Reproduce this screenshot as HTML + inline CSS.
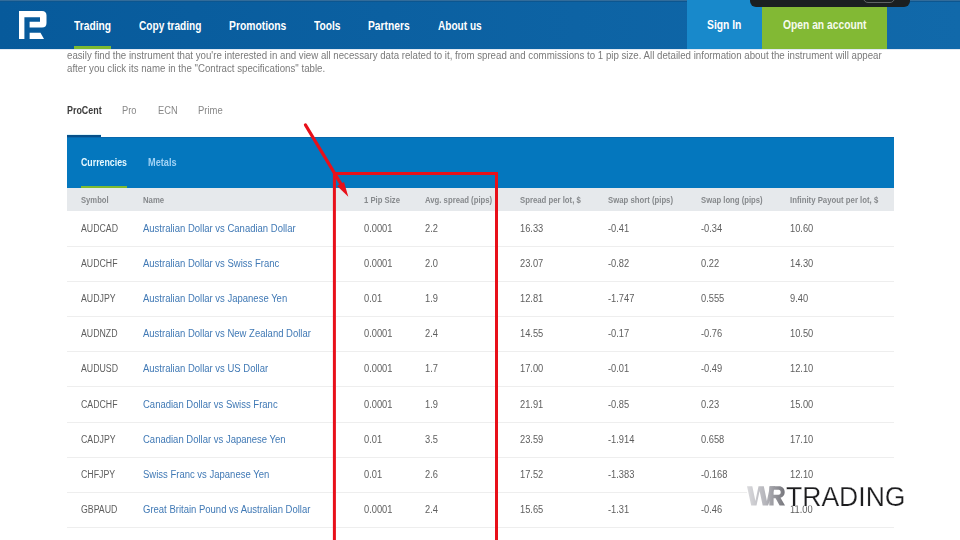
<!DOCTYPE html>
<html><head><meta charset="utf-8"><style>
*{margin:0;padding:0;box-sizing:border-box}
html,body{width:960px;height:540px;overflow:hidden;background:#fff;font-family:"Liberation Sans",sans-serif;position:relative}
.t{position:absolute;white-space:nowrap;line-height:1;transform-origin:0 0}
.b{position:absolute}
#wrap{position:absolute;left:0;top:0;width:960px;height:540px;overflow:hidden;filter:blur(0.3px)}
</style></head><body><div id="wrap">
<div class="b" style="left:0px;top:0px;width:960px;height:49px;background:linear-gradient(90deg,#075a9b,#1169aa);"></div>
<div class="b" style="left:0px;top:0px;width:960px;height:1px;background:#336c9a;"></div>
<div class="b" style="left:0px;top:1px;width:960px;height:1px;background:#0c5690;"></div>
<div class="b" style="left:687px;top:0px;width:75px;height:49px;background:#1889cb;"></div>
<div class="b" style="left:762px;top:0px;width:125px;height:49px;background:#82b934;"></div>
<div class="b" style="left:74px;top:46px;width:37px;height:3px;background:#7dba31;"></div>
<div class="b" style="left:0px;top:49px;width:960px;height:1px;background:#e2eaf3;"></div>
<div class="b" style="left:750px;top:-10px;width:159.5px;height:17px;background:#1b1f21;border-radius:6px"></div>
<div class="b" style="left:863px;top:-10px;width:32px;height:12.5px;background:transparent;border:1px solid #5f6365;border-radius:5px"></div>
<div class="b" style="left:67px;top:137px;width:827px;height:51px;background:#0477be;"></div>
<div class="b" style="left:67px;top:137px;width:827px;height:1px;background:#0868ad;"></div>
<div class="b" style="left:67px;top:135px;width:34px;height:2px;background:#07508a;"></div>
<div class="b" style="left:67px;top:134px;width:34px;height:1px;background:#dff5fb;"></div>
<div class="b" style="left:81px;top:185.5px;width:46px;height:2.5px;background:#7dba31;"></div>
<div class="b" style="left:67px;top:188px;width:827px;height:23px;background:#e6e9ec;"></div>
<div class="b" style="left:67px;top:246px;width:827px;height:1px;background:#eeeeee;"></div>
<div class="b" style="left:67px;top:281px;width:827px;height:1px;background:#eeeeee;"></div>
<div class="b" style="left:67px;top:316px;width:827px;height:1px;background:#eeeeee;"></div>
<div class="b" style="left:67px;top:351px;width:827px;height:1px;background:#eeeeee;"></div>
<div class="b" style="left:67px;top:386px;width:827px;height:1px;background:#eeeeee;"></div>
<div class="b" style="left:67px;top:422px;width:827px;height:1px;background:#eeeeee;"></div>
<div class="b" style="left:67px;top:457px;width:827px;height:1px;background:#eeeeee;"></div>
<div class="b" style="left:67px;top:492px;width:827px;height:1px;background:#eeeeee;"></div>
<div class="b" style="left:67px;top:527px;width:827px;height:1px;background:#eeeeee;"></div>
<svg class="b" style="left:0;top:0" width="60" height="49" viewBox="0 0 60 49">
<path fill="#fff" d="M19 11 H42 Q46.5 11 46.5 15.5 V23 Q46.5 27.6 42 27.6 H29.6 V21.7 H40 V17.2 H24.4 V39 H19 Z"/>
<path fill="#fff" d="M29.6 32.8 H40.5 L44 39 H29.6 Z"/>
</svg>
<div class="t" style="left:74.25px;top:20.00px;font-size:12.5px;font-weight:bold;color:#ffffff;transform:scaleX(0.82)">Trading</div>
<div class="t" style="left:138.75px;top:20.00px;font-size:12.5px;font-weight:bold;color:#ffffff;transform:scaleX(0.81)">Copy trading</div>
<div class="t" style="left:228.75px;top:20.00px;font-size:12.5px;font-weight:bold;color:#ffffff;transform:scaleX(0.826)">Promotions</div>
<div class="t" style="left:314.25px;top:20.00px;font-size:12.5px;font-weight:bold;color:#ffffff;transform:scaleX(0.82)">Tools</div>
<div class="t" style="left:368.25px;top:20.00px;font-size:12.5px;font-weight:bold;color:#ffffff;transform:scaleX(0.82)">Partners</div>
<div class="t" style="left:438.25px;top:20.00px;font-size:12.5px;font-weight:bold;color:#ffffff;transform:scaleX(0.807)">About us</div>
<div class="t" style="left:706.80px;top:19.00px;font-size:12.5px;font-weight:bold;color:#fff;transform:scaleX(0.826)">Sign In</div>
<div class="t" style="left:782.80px;top:19.00px;font-size:12.5px;font-weight:bold;color:#f6fbee;transform:scaleX(0.823)">Open an account</div>
<div class="t" style="left:67.00px;top:50.00px;font-size:11px;font-weight:normal;color:#7a7a7a;transform:scaleX(0.881)">easily find the instrument that you're interested in and view all necessary data related to it, from spread and commissions to 1 pip size. All detailed information about the instrument will appear</div>
<div class="t" style="left:67.00px;top:63.00px;font-size:11px;font-weight:normal;color:#7a7a7a;transform:scaleX(0.88)">after you click its name in the "Contract specifications" table.</div>
<div class="t" style="left:67.00px;top:106.00px;font-size:10px;font-weight:bold;color:#3c3c3c;transform:scaleX(0.892)">ProCent</div>
<div class="t" style="left:122.40px;top:106.00px;font-size:10px;font-weight:normal;color:#888;transform:scaleX(0.93)">Pro</div>
<div class="t" style="left:157.90px;top:106.00px;font-size:10px;font-weight:normal;color:#888;transform:scaleX(0.93)">ECN</div>
<div class="t" style="left:197.50px;top:106.00px;font-size:10px;font-weight:normal;color:#888;transform:scaleX(0.945)">Prime</div>
<div class="t" style="left:81.00px;top:158.00px;font-size:10px;font-weight:bold;color:#e6f8ff;transform:scaleX(0.88)">Currencies</div>
<div class="t" style="left:148.00px;top:158.00px;font-size:10px;font-weight:bold;color:#a2d3f5;transform:scaleX(0.919)">Metals</div>
<div class="t" style="left:80.70px;top:196.00px;font-size:9px;font-weight:bold;color:#86898c;transform:scaleX(0.85)">Symbol</div>
<div class="t" style="left:142.70px;top:196.00px;font-size:9px;font-weight:bold;color:#86898c;transform:scaleX(0.86)">Name</div>
<div class="t" style="left:364.40px;top:196.00px;font-size:9px;font-weight:bold;color:#86898c;transform:scaleX(0.857)">1 Pip Size</div>
<div class="t" style="left:424.80px;top:196.00px;font-size:9px;font-weight:bold;color:#86898c;transform:scaleX(0.859)">Avg. spread (pips)</div>
<div class="t" style="left:520.00px;top:196.00px;font-size:9px;font-weight:bold;color:#86898c;transform:scaleX(0.862)">Spread per lot, $</div>
<div class="t" style="left:607.90px;top:196.00px;font-size:9px;font-weight:bold;color:#86898c;transform:scaleX(0.861)">Swap short (pips)</div>
<div class="t" style="left:700.80px;top:196.00px;font-size:9px;font-weight:bold;color:#86898c;transform:scaleX(0.856)">Swap long (pips)</div>
<div class="t" style="left:789.70px;top:196.00px;font-size:9px;font-weight:bold;color:#86898c;transform:scaleX(0.865)">Infinity Payout per lot, $</div>
<div class="t" style="left:80.80px;top:224.00px;font-size:10px;font-weight:normal;color:#5e5e5e;transform:scaleX(0.876)">AUDCAD</div>
<div class="t" style="left:142.70px;top:224.00px;font-size:10px;font-weight:normal;color:#4079b5;transform:scaleX(0.95)">Australian Dollar vs Canadian Dollar</div>
<div class="t" style="left:364.00px;top:224.00px;font-size:10px;font-weight:normal;color:#5e5e5e;transform:scaleX(0.93)">0.0001</div>
<div class="t" style="left:424.80px;top:224.00px;font-size:10px;font-weight:normal;color:#5e5e5e;transform:scaleX(0.93)">2.2</div>
<div class="t" style="left:520.00px;top:224.00px;font-size:10px;font-weight:normal;color:#5e5e5e;transform:scaleX(0.93)">16.33</div>
<div class="t" style="left:607.90px;top:224.00px;font-size:10px;font-weight:normal;color:#5e5e5e;transform:scaleX(0.93)">-0.41</div>
<div class="t" style="left:700.80px;top:224.00px;font-size:10px;font-weight:normal;color:#5e5e5e;transform:scaleX(0.93)">-0.34</div>
<div class="t" style="left:789.70px;top:224.00px;font-size:10px;font-weight:normal;color:#5e5e5e;transform:scaleX(0.93)">10.60</div>
<div class="t" style="left:80.80px;top:259.00px;font-size:10px;font-weight:normal;color:#5e5e5e;transform:scaleX(0.876)">AUDCHF</div>
<div class="t" style="left:142.70px;top:259.00px;font-size:10px;font-weight:normal;color:#4079b5;transform:scaleX(0.95)">Australian Dollar vs Swiss Franc</div>
<div class="t" style="left:364.00px;top:259.00px;font-size:10px;font-weight:normal;color:#5e5e5e;transform:scaleX(0.93)">0.0001</div>
<div class="t" style="left:424.80px;top:259.00px;font-size:10px;font-weight:normal;color:#5e5e5e;transform:scaleX(0.93)">2.0</div>
<div class="t" style="left:520.00px;top:259.00px;font-size:10px;font-weight:normal;color:#5e5e5e;transform:scaleX(0.93)">23.07</div>
<div class="t" style="left:607.90px;top:259.00px;font-size:10px;font-weight:normal;color:#5e5e5e;transform:scaleX(0.93)">-0.82</div>
<div class="t" style="left:700.80px;top:259.00px;font-size:10px;font-weight:normal;color:#5e5e5e;transform:scaleX(0.93)">0.22</div>
<div class="t" style="left:789.70px;top:259.00px;font-size:10px;font-weight:normal;color:#5e5e5e;transform:scaleX(0.93)">14.30</div>
<div class="t" style="left:80.80px;top:294.00px;font-size:10px;font-weight:normal;color:#5e5e5e;transform:scaleX(0.876)">AUDJPY</div>
<div class="t" style="left:142.70px;top:294.00px;font-size:10px;font-weight:normal;color:#4079b5;transform:scaleX(0.95)">Australian Dollar vs Japanese Yen</div>
<div class="t" style="left:364.00px;top:294.00px;font-size:10px;font-weight:normal;color:#5e5e5e;transform:scaleX(0.93)">0.01</div>
<div class="t" style="left:424.80px;top:294.00px;font-size:10px;font-weight:normal;color:#5e5e5e;transform:scaleX(0.93)">1.9</div>
<div class="t" style="left:520.00px;top:294.00px;font-size:10px;font-weight:normal;color:#5e5e5e;transform:scaleX(0.93)">12.81</div>
<div class="t" style="left:607.90px;top:294.00px;font-size:10px;font-weight:normal;color:#5e5e5e;transform:scaleX(0.93)">-1.747</div>
<div class="t" style="left:700.80px;top:294.00px;font-size:10px;font-weight:normal;color:#5e5e5e;transform:scaleX(0.93)">0.555</div>
<div class="t" style="left:789.70px;top:294.00px;font-size:10px;font-weight:normal;color:#5e5e5e;transform:scaleX(0.93)">9.40</div>
<div class="t" style="left:80.80px;top:329.00px;font-size:10px;font-weight:normal;color:#5e5e5e;transform:scaleX(0.876)">AUDNZD</div>
<div class="t" style="left:142.70px;top:329.00px;font-size:10px;font-weight:normal;color:#4079b5;transform:scaleX(0.95)">Australian Dollar vs New Zealand Dollar</div>
<div class="t" style="left:364.00px;top:329.00px;font-size:10px;font-weight:normal;color:#5e5e5e;transform:scaleX(0.93)">0.0001</div>
<div class="t" style="left:424.80px;top:329.00px;font-size:10px;font-weight:normal;color:#5e5e5e;transform:scaleX(0.93)">2.4</div>
<div class="t" style="left:520.00px;top:329.00px;font-size:10px;font-weight:normal;color:#5e5e5e;transform:scaleX(0.93)">14.55</div>
<div class="t" style="left:607.90px;top:329.00px;font-size:10px;font-weight:normal;color:#5e5e5e;transform:scaleX(0.93)">-0.17</div>
<div class="t" style="left:700.80px;top:329.00px;font-size:10px;font-weight:normal;color:#5e5e5e;transform:scaleX(0.93)">-0.76</div>
<div class="t" style="left:789.70px;top:329.00px;font-size:10px;font-weight:normal;color:#5e5e5e;transform:scaleX(0.93)">10.50</div>
<div class="t" style="left:80.80px;top:364.00px;font-size:10px;font-weight:normal;color:#5e5e5e;transform:scaleX(0.876)">AUDUSD</div>
<div class="t" style="left:142.70px;top:364.00px;font-size:10px;font-weight:normal;color:#4079b5;transform:scaleX(0.95)">Australian Dollar vs US Dollar</div>
<div class="t" style="left:364.00px;top:364.00px;font-size:10px;font-weight:normal;color:#5e5e5e;transform:scaleX(0.93)">0.0001</div>
<div class="t" style="left:424.80px;top:364.00px;font-size:10px;font-weight:normal;color:#5e5e5e;transform:scaleX(0.93)">1.7</div>
<div class="t" style="left:520.00px;top:364.00px;font-size:10px;font-weight:normal;color:#5e5e5e;transform:scaleX(0.93)">17.00</div>
<div class="t" style="left:607.90px;top:364.00px;font-size:10px;font-weight:normal;color:#5e5e5e;transform:scaleX(0.93)">-0.01</div>
<div class="t" style="left:700.80px;top:364.00px;font-size:10px;font-weight:normal;color:#5e5e5e;transform:scaleX(0.93)">-0.49</div>
<div class="t" style="left:789.70px;top:364.00px;font-size:10px;font-weight:normal;color:#5e5e5e;transform:scaleX(0.93)">12.10</div>
<div class="t" style="left:80.80px;top:400.00px;font-size:10px;font-weight:normal;color:#5e5e5e;transform:scaleX(0.876)">CADCHF</div>
<div class="t" style="left:142.70px;top:400.00px;font-size:10px;font-weight:normal;color:#4079b5;transform:scaleX(0.95)">Canadian Dollar vs Swiss Franc</div>
<div class="t" style="left:364.00px;top:400.00px;font-size:10px;font-weight:normal;color:#5e5e5e;transform:scaleX(0.93)">0.0001</div>
<div class="t" style="left:424.80px;top:400.00px;font-size:10px;font-weight:normal;color:#5e5e5e;transform:scaleX(0.93)">1.9</div>
<div class="t" style="left:520.00px;top:400.00px;font-size:10px;font-weight:normal;color:#5e5e5e;transform:scaleX(0.93)">21.91</div>
<div class="t" style="left:607.90px;top:400.00px;font-size:10px;font-weight:normal;color:#5e5e5e;transform:scaleX(0.93)">-0.85</div>
<div class="t" style="left:700.80px;top:400.00px;font-size:10px;font-weight:normal;color:#5e5e5e;transform:scaleX(0.93)">0.23</div>
<div class="t" style="left:789.70px;top:400.00px;font-size:10px;font-weight:normal;color:#5e5e5e;transform:scaleX(0.93)">15.00</div>
<div class="t" style="left:80.80px;top:435.00px;font-size:10px;font-weight:normal;color:#5e5e5e;transform:scaleX(0.876)">CADJPY</div>
<div class="t" style="left:142.70px;top:435.00px;font-size:10px;font-weight:normal;color:#4079b5;transform:scaleX(0.95)">Canadian Dollar vs Japanese Yen</div>
<div class="t" style="left:364.00px;top:435.00px;font-size:10px;font-weight:normal;color:#5e5e5e;transform:scaleX(0.93)">0.01</div>
<div class="t" style="left:424.80px;top:435.00px;font-size:10px;font-weight:normal;color:#5e5e5e;transform:scaleX(0.93)">3.5</div>
<div class="t" style="left:520.00px;top:435.00px;font-size:10px;font-weight:normal;color:#5e5e5e;transform:scaleX(0.93)">23.59</div>
<div class="t" style="left:607.90px;top:435.00px;font-size:10px;font-weight:normal;color:#5e5e5e;transform:scaleX(0.93)">-1.914</div>
<div class="t" style="left:700.80px;top:435.00px;font-size:10px;font-weight:normal;color:#5e5e5e;transform:scaleX(0.93)">0.658</div>
<div class="t" style="left:789.70px;top:435.00px;font-size:10px;font-weight:normal;color:#5e5e5e;transform:scaleX(0.93)">17.10</div>
<div class="t" style="left:80.80px;top:470.00px;font-size:10px;font-weight:normal;color:#5e5e5e;transform:scaleX(0.876)">CHFJPY</div>
<div class="t" style="left:142.70px;top:470.00px;font-size:10px;font-weight:normal;color:#4079b5;transform:scaleX(0.95)">Swiss Franc vs Japanese Yen</div>
<div class="t" style="left:364.00px;top:470.00px;font-size:10px;font-weight:normal;color:#5e5e5e;transform:scaleX(0.93)">0.01</div>
<div class="t" style="left:424.80px;top:470.00px;font-size:10px;font-weight:normal;color:#5e5e5e;transform:scaleX(0.93)">2.6</div>
<div class="t" style="left:520.00px;top:470.00px;font-size:10px;font-weight:normal;color:#5e5e5e;transform:scaleX(0.93)">17.52</div>
<div class="t" style="left:607.90px;top:470.00px;font-size:10px;font-weight:normal;color:#5e5e5e;transform:scaleX(0.93)">-1.383</div>
<div class="t" style="left:700.80px;top:470.00px;font-size:10px;font-weight:normal;color:#5e5e5e;transform:scaleX(0.93)">-0.168</div>
<div class="t" style="left:789.70px;top:470.00px;font-size:10px;font-weight:normal;color:#5e5e5e;transform:scaleX(0.93)">12.10</div>
<div class="t" style="left:80.80px;top:505.00px;font-size:10px;font-weight:normal;color:#5e5e5e;transform:scaleX(0.876)">GBPAUD</div>
<div class="t" style="left:142.70px;top:505.00px;font-size:10px;font-weight:normal;color:#4079b5;transform:scaleX(0.95)">Great Britain Pound vs Australian Dollar</div>
<div class="t" style="left:364.00px;top:505.00px;font-size:10px;font-weight:normal;color:#5e5e5e;transform:scaleX(0.93)">0.0001</div>
<div class="t" style="left:424.80px;top:505.00px;font-size:10px;font-weight:normal;color:#5e5e5e;transform:scaleX(0.93)">2.4</div>
<div class="t" style="left:520.00px;top:505.00px;font-size:10px;font-weight:normal;color:#5e5e5e;transform:scaleX(0.93)">15.65</div>
<div class="t" style="left:607.90px;top:505.00px;font-size:10px;font-weight:normal;color:#5e5e5e;transform:scaleX(0.93)">-1.31</div>
<div class="t" style="left:700.80px;top:505.00px;font-size:10px;font-weight:normal;color:#5e5e5e;transform:scaleX(0.93)">-0.46</div>
<div class="t" style="left:789.70px;top:505.00px;font-size:10px;font-weight:normal;color:#5e5e5e;transform:scaleX(0.93)">11.00</div>
<svg class="b" style="left:0;top:0" width="960" height="540" viewBox="0 0 960 540">
<g fill="none" stroke="#e8101a" stroke-width="3">
<path d="M334.4 541 V173.4 H496.5 V541"/>
<path d="M305.5 125 L341 184" stroke-linecap="round" stroke-width="3.3"/>
</g>
<path fill="#e8101a" d="M348.3 196.8 L337.2 185.9 L344.0 181.9 Z"/>
</svg>
<svg class="b" style="left:0;top:0" width="960" height="540" viewBox="0 0 960 540">
<defs><linearGradient id="g" gradientUnits="userSpaceOnUse" x1="747" y1="0" x2="785" y2="0"><stop offset="0" stop-color="#dadadd"/><stop offset="0.5" stop-color="#b4b4ba"/><stop offset="1" stop-color="#75757b"/></linearGradient></defs>
<rect x="747" y="483" width="165" height="22.5" fill="#fff"/>
<path fill="url(#g)" d="M747 486.3 H752.3 L755.4 501 L758.5 486.3 H763.8 L766.9 501 L770 486.3 H775.3 L768 505.6 H762.7 L759.6 491 L756.5 505.6 H751.2 Z"/>
<path fill="url(#g)" fill-rule="evenodd" d="M769.3 486.3 H779 C782.5 486.3 784.7 488.8 784.7 492.2 C784.7 495 783 497 780.5 497.8 L785 505.6 H779.6 L775.6 498.2 H773.6 V505.6 H769.3 Z M773.6 489.8 V494.8 H778.6 C780 494.8 780.7 493.8 780.7 492.3 C780.7 490.8 780 489.8 778.6 489.8 Z"/>
<text x="786" y="505.6" font-family="Liberation Sans" font-size="26.8" fill="#1d1d1f" stroke="#fff" stroke-width="0.25" textLength="119.5" lengthAdjust="spacingAndGlyphs">TRADING</text>
</svg>
</div></body></html>
